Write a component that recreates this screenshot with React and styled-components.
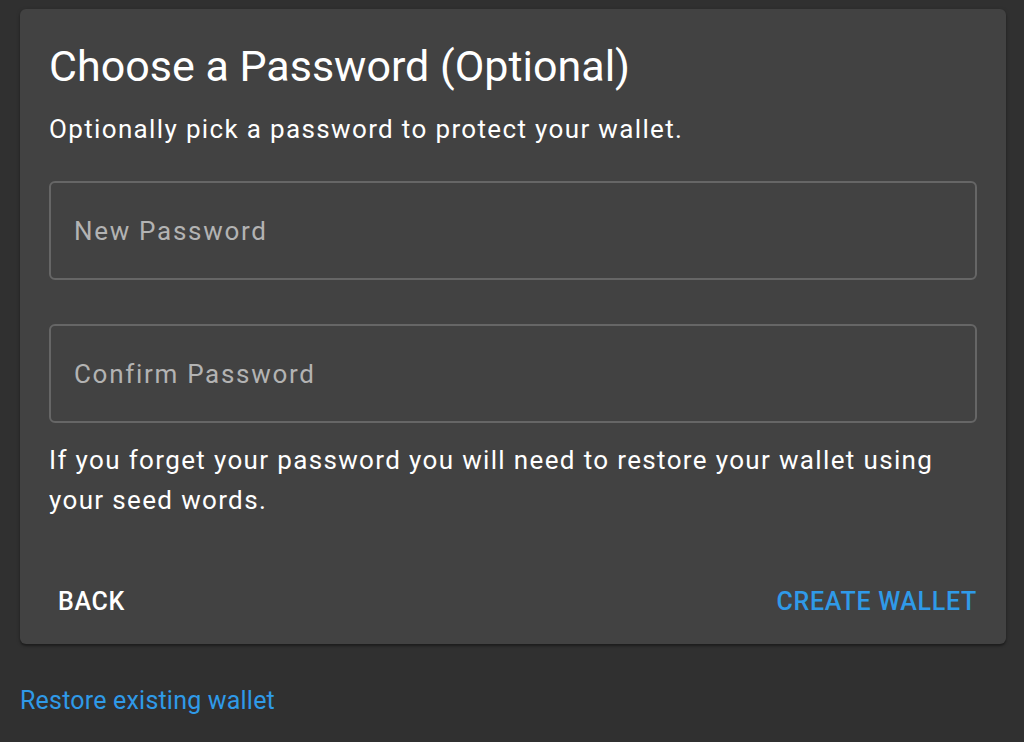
import React from 'react';
import styled, { createGlobalStyle } from 'styled-components';

const GlobalStyle = createGlobalStyle`
  html, body {
    margin: 0;
    padding: 0;
    background: #303030;
    font-family: Roboto, "Noto Sans", sans-serif;
    color: #fff;
  }
`;

const Page = styled.main`
  padding: 9px 18px 0 20px;
  min-height: 742px;
  box-sizing: border-box;
`;

const Card = styled.section`
  background: #424242;
  border-radius: 6px;
  box-shadow: 0 2px 2px rgba(0, 0, 0, 0.3), 0 1px 4px rgba(0, 0, 0, 0.2);
  padding: 31px 29px 16px 29px;
`;

const Title = styled.h1`
  margin: 0;
  font-size: 43px;
  font-weight: 400;
  line-height: 52px;
`;

const Lead = styled.p`
  margin: 18px 0 32px;
  font-size: 26px;
  letter-spacing: 1.35px;
  line-height: 39px;
`;

const Field = styled.label`
  display: flex;
  align-items: center;
  height: 99px;
  box-sizing: border-box;
  border: 2px solid #666;
  border-radius: 6px;
  padding: 0 23px;
  margin-bottom: ${(p) => p.$gap || 0}px;
  font-size: 26px;
  letter-spacing: 1.7px;
  color: #b3b3b3;
`;

const Helper = styled.p`
  margin: 17px 0 0;
  font-size: 26px;
  letter-spacing: 1.35px;
  line-height: 40px;
`;

const Actions = styled.div`
  display: flex;
  justify-content: space-between;
  align-items: center;
  margin-top: 55px;
`;

const TextButton = styled.button`
  background: none;
  border: none;
  padding: 8px ${(p) => (p.$primary ? 0 : 9)}px;
  font-family: inherit;
  font-size: 25px;
  line-height: 37px;
  font-weight: 500;
  letter-spacing: 0.7px;
  text-transform: uppercase;
  color: ${(p) => (p.$primary ? '#2f9ae8' : '#fff')};
  cursor: pointer;
`;

const RestoreLink = styled.a`
  display: inline-block;
  margin-top: 38px;
  font-size: 25px;
  line-height: 37px;
  letter-spacing: 0.2px;
  color: #2f9ae8;
  text-decoration: none;
`;

export default function App() {
  return (
    <>
      <GlobalStyle />
      <Page>
        <Card>
          <Title>Choose a Password (Optional)</Title>
          <Lead>Optionally pick a password to protect your wallet.</Lead>
          <Field $gap={44}>New Password</Field>
          <Field>Confirm Password</Field>
          <Helper>
            If you forget your password you will need to restore your wallet using
            your seed words.
          </Helper>
          <Actions>
            <TextButton>Back</TextButton>
            <TextButton $primary>Create Wallet</TextButton>
          </Actions>
        </Card>
        <RestoreLink href="#">Restore existing wallet</RestoreLink>
      </Page>
    </>
  );
}
